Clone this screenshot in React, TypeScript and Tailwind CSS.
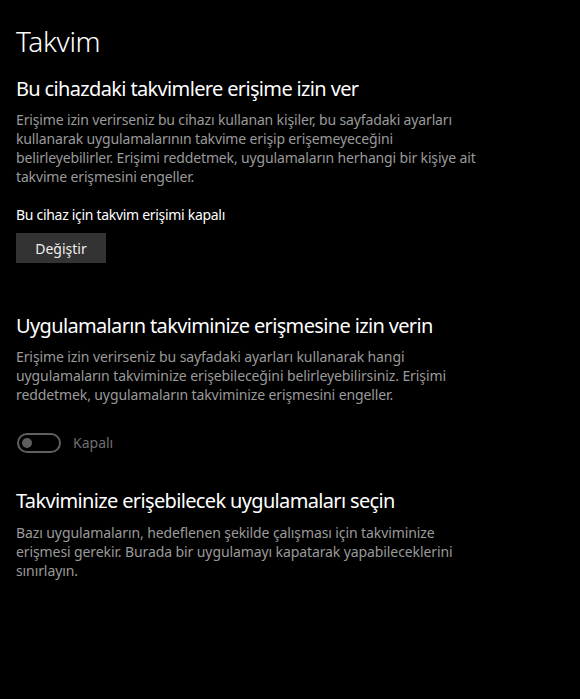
export default function App() {
  return (
    <div
      className="min-h-[699px] w-full bg-black px-4 pt-[24px] text-white"
      style={{ fontFamily: '"Noto Sans", "Open Sans", sans-serif' }}
    >
      <h1 className="text-[28px] font-light leading-[34px] tracking-[-0.3px]">Takvim</h1>

      {/* Device access */}
      <section className="mt-[17px]">
        <h2 className="text-[20px] leading-[28px] tracking-[-0.65px]">
          Bu cihazdaki takvimlere erişime izin ver
        </h2>
        <p className="mt-[7px] text-[14px] leading-[19px] tracking-[-0.15px] text-[#9a9a9a]">
          Erişime izin verirseniz bu cihazı kullanan kişiler, bu sayfadaki ayarları
          <br />
          kullanarak uygulamalarının takvime erişip erişemeyeceğini
          <br />
          belirleyebilirler. Erişimi reddetmek, uygulamaların herhangi bir kişiye ait
          <br />
          takvime erişmesini engeller.
        </p>
        <p className="mt-[19px] text-[14px] leading-[19px] tracking-[-0.3px]">
          Bu cihaz için takvim erişimi kapalı
        </p>
        <button className="mt-[9px] h-[30px] w-[90px] bg-[#333333] text-[14px] text-[#eeeeee]">
          Değiştir
        </button>
      </section>

      {/* App access */}
      <section className="mt-[49px]">
        <h2 className="text-[20px] leading-[28px] tracking-[-0.65px]">
          Uygulamaların takviminize erişmesine izin verin
        </h2>
        <p className="mt-[7px] max-w-[460px] text-[14px] leading-[19px] tracking-[-0.1px] text-[#9a9a9a]">
          Erişime izin verirseniz bu sayfadaki ayarları kullanarak hangi
          uygulamaların takviminize erişebileceğini belirleyebilirsiniz. Erişimi
          reddetmek, uygulamaların takviminize erişmesini engeller.
        </p>
        <div className="mt-[28px] flex items-center gap-[12px]">
          <div className="ml-[1px] flex h-[20px] w-[44px] items-center rounded-full border-2 border-[#5f5f5f] px-[3px]">
            <div className="h-[10px] w-[10px] rounded-full bg-[#5f5f5f]" />
          </div>
          <span className="text-[14px] text-[#6f6f6f]">Kapalı</span>
        </div>
      </section>

      {/* Choose apps */}
      <section className="mt-[34px]">
        <h2 className="text-[20px] leading-[28px] tracking-[-0.65px]">
          Takviminize erişebilecek uygulamaları seçin
        </h2>
        <p className="mt-[8px] max-w-[475px] text-[14px] leading-[19px] tracking-[-0.1px] text-[#9a9a9a]">
          Bazı uygulamaların, hedeflenen şekilde çalışması için takviminize
          erişmesi gerekir. Burada bir uygulamayı kapatarak yapabileceklerini
          sınırlayın.
        </p>
      </section>
    </div>
  );
}
